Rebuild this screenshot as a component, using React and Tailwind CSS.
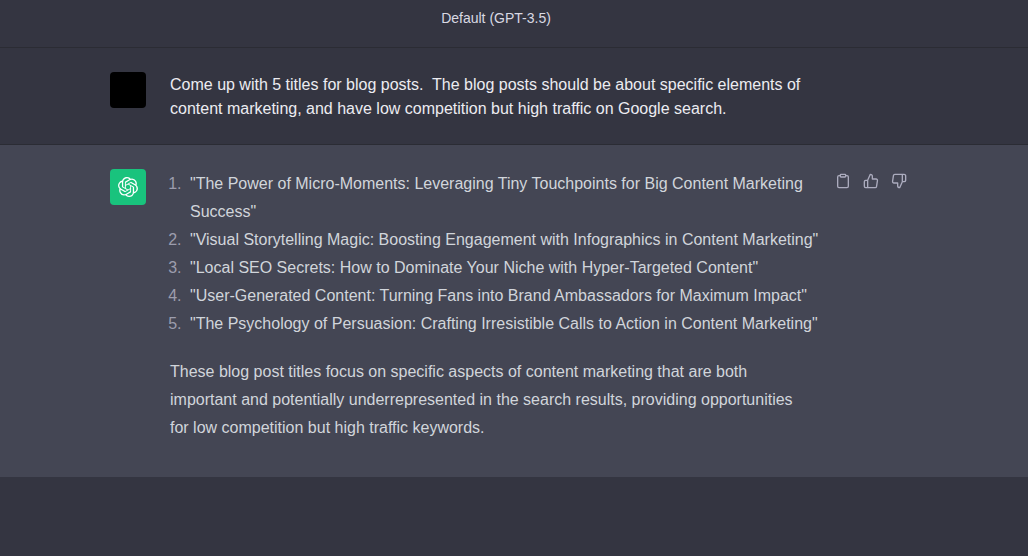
import React from 'react';

const titles = [
  'The Power of Micro-Moments: Leveraging Tiny Touchpoints for Big Content Marketing Success',
  'Visual Storytelling Magic: Boosting Engagement with Infographics in Content Marketing',
  'Local SEO Secrets: How to Dominate Your Niche with Hyper-Targeted Content',
  'User-Generated Content: Turning Fans into Brand Ambassadors for Maximum Impact',
  'The Psychology of Persuasion: Crafting Irresistible Calls to Action in Content Marketing',
];

const OpenAiLogo = () => (
  <svg viewBox="0 0 24 24" className="h-5 w-5" fill="currentColor" aria-hidden="true">
    <path d="M22.2819 9.8211a5.9847 5.9847 0 0 0-.5157-4.9108 6.0462 6.0462 0 0 0-6.5098-2.9A6.0651 6.0651 0 0 0 4.9807 4.1818a5.9847 5.9847 0 0 0-3.9977 2.9 6.0462 6.0462 0 0 0 .7427 7.0966 5.98 5.98 0 0 0 .511 4.9107 6.051 6.051 0 0 0 6.5146 2.9001A5.9847 5.9847 0 0 0 13.2599 24a6.0557 6.0557 0 0 0 5.7718-4.2058 5.9894 5.9894 0 0 0 3.9977-2.9001 6.0557 6.0557 0 0 0-.7475-7.073zm-9.022 12.6081a4.4755 4.4755 0 0 1-2.8764-1.0408l.1419-.0804 4.7783-2.7582a.7948.7948 0 0 0 .3927-.6813v-6.7369l2.02 1.1686a.071.071 0 0 1 .038.0615v5.5826a4.504 4.504 0 0 1-4.4945 4.4849zm-9.6607-4.1254a4.4708 4.4708 0 0 1-.5346-3.0137l.142.0852 4.783 2.7582a.7712.7712 0 0 0 .7806 0l5.8428-3.3685v2.3324a.0804.0804 0 0 1-.0332.0615L9.74 19.9502a4.4992 4.4992 0 0 1-6.1408-1.6464zM2.3408 7.8956a4.485 4.485 0 0 1 2.3655-1.9728V11.6a.7664.7664 0 0 0 .3879.6765l5.8144 3.3543-2.0201 1.1685a.0757.0757 0 0 1-.071 0l-4.8303-2.7865A4.504 4.504 0 0 1 2.3408 7.872zm16.5963 3.8558L13.1038 8.364 15.1192 7.2a.0757.0757 0 0 1 .071 0l4.8303 2.7913a4.4944 4.4944 0 0 1-.6765 8.1042v-5.6772a.79.79 0 0 0-.407-.667zm2.0107-3.0231l-.142-.0852-4.7735-2.7818a.7759.7759 0 0 0-.7854 0L9.409 9.2297V6.8974a.0662.0662 0 0 1 .0284-.0615l4.8303-2.7866a4.4992 4.4992 0 0 1 6.6802 4.66zM8.3065 12.863l-2.02-1.1638a.0804.0804 0 0 1-.038-.0567V6.0742a4.4992 4.4992 0 0 1 7.3757-3.4537l-.142.0805L8.704 5.459a.7948.7948 0 0 0-.3927.6813zm1.0976-2.3654l2.602-1.4998 2.6069 1.4998v2.9994l-2.5974 1.4997-2.6067-1.4997Z" />
  </svg>
);

const IconButton = ({ label, children }) => (
  <button type="button" aria-label={label} className="rounded-md p-1 hover:text-gray-200">
    <svg
      viewBox="0 0 24 24"
      className="h-4 w-4"
      fill="none"
      stroke="currentColor"
      strokeWidth="2"
      strokeLinecap="round"
      strokeLinejoin="round"
      aria-hidden="true"
    >
      {children}
    </svg>
  </button>
);

const Actions = () => (
  <div className="flex gap-1 text-[#acacbe]">
    <IconButton label="Copy">
      <path d="M16 4h2a2 2 0 0 1 2 2v14a2 2 0 0 1-2 2H6a2 2 0 0 1-2-2V6a2 2 0 0 1 2-2h2" />
      <rect x="8" y="2" width="8" height="4" rx="1" ry="1" />
    </IconButton>
    <IconButton label="Good response">
      <path d="M14 9V5a3 3 0 0 0-3-3l-4 9v11h11.28a2 2 0 0 0 2-1.7l1.38-9a2 2 0 0 0-2-2.3zM7 22H4a2 2 0 0 1-2-2v-7a2 2 0 0 1 2-2h3" />
    </IconButton>
    <IconButton label="Bad response">
      <path d="M10 15v4a3 3 0 0 0 3 3l4-9V2H5.72a2 2 0 0 0-2 1.7l-1.38 9a2 2 0 0 0 2 2.3zm7-13h2.67A2.31 2.31 0 0 1 22 4v7a2.31 2.31 0 0 1-2.33 2H17" />
    </IconButton>
  </div>
);

const Message = ({ avatar, actions, className = '', children }) => (
  <section className={`border-b border-[#2b2c34] last:border-b-0 ${className}`}>
    <div className="mx-auto flex max-w-[808px] items-start pt-6 pb-[23px]">
      {avatar}
      <div className="ml-6 w-[653px] shrink-0 pt-px">{children}</div>
      {actions && <div className="ml-2">{actions}</div>}
    </div>
  </section>
);

export default function App() {
  return (
    <main className="min-h-screen bg-[#343541] font-['Liberation_Sans',Arial,sans-serif] text-base text-[#ececf1]">
      <header className="border-b border-[#2b2c34] pt-2 pr-9 pb-[19px] text-center text-sm text-[#d9d9e3]">
        <h1>Default (GPT-3.5)</h1>
      </header>

      <Message avatar={<div className="h-9 w-9 shrink-0 rounded-sm bg-black" />}>
        <p className="leading-6">
          Come up with 5 titles for blog posts.&nbsp; The blog posts should be about specific elements of content
          marketing, and have low competition but high traffic on Google search.
        </p>
      </Message>

      <Message
        className="bg-[#444654] text-[#d1d5db]"
        avatar={
          <div className="flex h-9 w-9 shrink-0 items-center justify-center rounded-sm bg-[#19c37d] text-white">
            <OpenAiLogo />
          </div>
        }
        actions={<Actions />}
      >
        <ol className="list-decimal pl-4 leading-7 marker:text-[#9c9dad]">
          {titles.map((title) => (
            <li key={title} className="pl-1">
              {`"${title}"`}
            </li>
          ))}
        </ol>
        <p className="mt-5 mb-3 pr-3 leading-7">
          These blog post titles focus on specific aspects of content marketing that are both important and potentially
          underrepresented in the search results, providing opportunities for low competition but high traffic keywords.
        </p>
      </Message>
    </main>
  );
}
